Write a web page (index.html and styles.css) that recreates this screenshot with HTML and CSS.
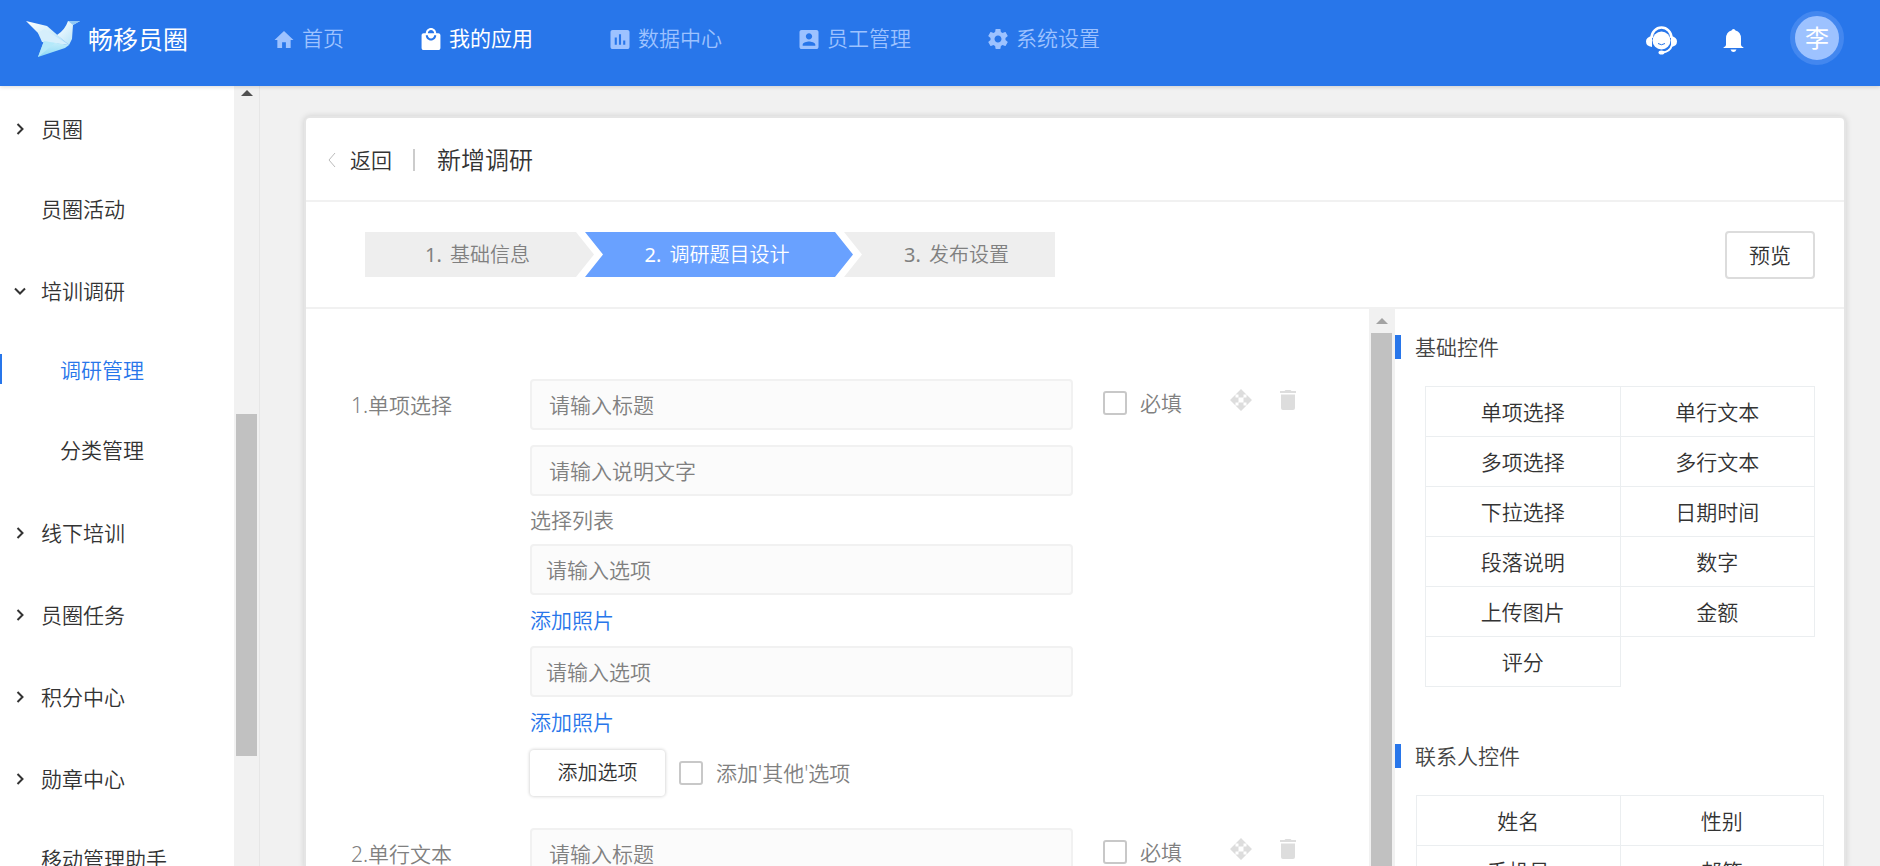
FILE: index.html
```html
<!DOCTYPE html>
<html lang="zh-CN">
<head>
<meta charset="utf-8">
<meta name="viewport" content="width=device-width, initial-scale=1">
<title>新增调研 - 畅移员圈</title>
<link rel="stylesheet" href="styles.css">
</head>
<body>
<svg class="sprite" aria-hidden="true">
  <symbol id="icon-right" viewBox="0 0 12 14"><path d="M3.5 2l5 5-5 5" fill="none" stroke="currentColor" stroke-width="2"/></symbol>
  <symbol id="icon-down" viewBox="0 0 12 14"><path d="M1 4.500l5 5 5-5" fill="none" stroke="currentColor" stroke-width="2"/></symbol>
  <symbol id="icon-move" viewBox="0 0 22 22"><path d="M11 0l5.500 5.500h-3V9h-5V5.500h-3zM11 22l5.500-5.500h-3V13h-5v3.500h-3zM0 11l5.500-5.500v3H9v5H5.500v3zM22 11l-5.500-5.500v3H13v5h3.500v3z" fill="currentColor"/><rect x="8.500" y="8.500" width="5" height="5" fill="#fff"/></symbol>
  <symbol id="icon-trash" viewBox="0 0 16 22"><path d="M0 2h4.500l1-1h5l1 1H16v2H0zM1 5.500h14V19q0 2-2 2H3q-2 0-2-2z" fill="currentColor"/></symbol>
</svg>

<header class="topbar">
  <a class="brand" href="#">
    <svg class="brand-logo" viewBox="0 0 54 36" aria-hidden="true">
      <defs>
        <linearGradient id="wing" x1="0" y1="0" x2="1" y2="1"><stop offset="0" stop-color="#fff"/><stop offset="1" stop-color="#a9def7"/></linearGradient>
        <linearGradient id="tail" x1="0" y1="0" x2="0" y2="1"><stop offset="0" stop-color="#c9effb"/><stop offset="1" stop-color="#8bd8f5"/></linearGradient>
      </defs>
      <path d="M0 0l21 5 22 19-26-7z" fill="url(#wing)"/>
      <path d="M12 12l6-4 25 16-27-3z" fill="#d6effc"/>
      <path d="M31 14Q39 9 42 0l12 0-7 4-1 14-3 6z" fill="url(#wing)"/>
      <path d="M42 0h12l-7 4z" fill="#8fc8f5"/>
      <path d="M18 20l25 4-4 3-27 9z" fill="url(#tail)"/>
      <path d="M18 20l-6 16 17-14z" fill="#b4e9fa"/>
    </svg>
    <span>畅移员圈</span>
  </a>
  <nav class="mainnav">
    <a href="#"><svg viewBox="0 0 20 20" aria-hidden="true"><path d="M10 1l10 9.500h-3V19h-5v-6H8v6H3v-8.500H0z"/></svg>首页</a>
    <a href="#" class="current"><svg class="tall" viewBox="3 1 18 21" aria-hidden="true"><path d="M19 6h-2c0-2.760-2.240-5-5-5S7 3.240 7 6H5c-1.100 0-2 .9-2 2v12c0 1.100.9 2 2 2h14c1.100 0 2-.9 2-2V8c0-1.100-.9-2-2-2zm-7-3c1.660 0 3 1.340 3 3H9c0-1.660 1.340-3 3-3zm0 10c-2.760 0-5-2.240-5-5h2c0 1.660 1.340 3 3 3s3-1.340 3-3h2c0 2.760-2.240 5-5 5z"/></svg>我的应用</a>
    <a href="#"><svg viewBox="3 3 18 18" aria-hidden="true"><path d="M19 3H5c-1.100 0-2 .9-2 2v14c0 1.100.9 2 2 2h14c1.100 0 2-.9 2-2V5c0-1.100-.9-2-2-2zM9 17H7v-7h2v7zm4 0h-2V7h2v10zm4 0h-2v-4h2v4z"/></svg>数据中心</a>
    <a href="#"><svg viewBox="3 3 18 18" aria-hidden="true"><path d="M3 5v14c0 1.100.89 2 2 2h14c1.100 0 2-.9 2-2V5c0-1.100-.9-2-2-2H5c-1.110 0-2 .9-2 2zm12 4c0 1.660-1.340 3-3 3s-3-1.340-3-3 1.340-3 3-3 3 1.340 3 3zm-9 8c0-2 4-3.100 6-3.100s6 1.100 6 3.100v1H6v-1z"/></svg>员工管理</a>
    <a href="#"><svg class="tall" viewBox="2 2 20 20" aria-hidden="true"><path d="M19.430 12.980c.04-.32.07-.64.07-.98s-.03-.66-.07-.98l2.110-1.650c.19-.15.24-.42.12-.64l-2-3.460c-.12-.22-.39-.3-.61-.22l-2.490 1c-.52-.4-1.080-.73-1.690-.98l-.38-2.650C14.460 2.180 14.250 2 14 2h-4c-.25 0-.46.18-.49.42l-.38 2.650c-.61.25-1.170.59-1.690.98l-2.490-1c-.23-.09-.49 0-.61.22l-2 3.460c-.13.22-.07.49.12.64l2.110 1.650c-.04.32-.07.65-.07.98s.03.66.07.98l-2.110 1.650c-.19.15-.24.42-.12.64l2 3.460c.12.22.39.3.61.22l2.490-1c.52.4 1.080.73 1.690.98l.38 2.650c.03.24.24.42.49.42h4c.25 0 .46-.18.49-.42l.38-2.650c.61-.25 1.170-.59 1.690-.98l2.490 1c.23.09.49 0 .61-.22l2-3.460c.12-.22.07-.49-.12-.64l-2.110-1.650zM12 15.500c-1.930 0-3.500-1.570-3.500-3.500s1.570-3.500 3.500-3.500 3.500 1.570 3.500 3.500-1.570 3.500-3.500 3.500z"/></svg>系统设置</a>
  </nav>
  <div class="tools">
    <button type="button" class="tool" aria-label="客服">
      <svg width="31" height="29" viewBox="0 0 31 29" aria-hidden="true">
        <circle cx="15.500" cy="14.500" r="9" fill="#fff"/>
        <path d="M5.500 12a10 10.500 0 0 1 20 0" fill="none" stroke="#fff" stroke-width="2.500"/>
        <path d="M26 19q-2 7-10 7.500" fill="none" stroke="#fff" stroke-width="2"/>
        <path d="M6 10v11q-6-1-6-5.500T6 10zM25 10v11q6-1 6-5.500T25 10z" fill="#fff"/>
        <ellipse cx="15.500" cy="26.500" rx="3" ry="2" fill="#fff"/>
        <path d="M12 17.500q3.500 2.500 7 0" fill="none" stroke="#2876ea" stroke-width="1"/>
      </svg>
    </button>
    <button type="button" class="tool" aria-label="通知">
      <svg width="21" height="23" viewBox="0 0 21 23" aria-hidden="true"><path d="M10.500 0q1.500 0 2 1.500 5.500 1.500 5.500 8V16q0 1 2.500 2.500v.5H.5v-.5Q3 17 3 16V9.500q0-6.500 5.500-8 .5-1.500 2-1.500zM7.500 20.500h6q-1 2.500-3 2.500t-3-2.500z" fill="#fff"/></svg>
    </button>
    <button type="button" class="avatar">李</button>
  </div>
</header>

<div class="body">
  <aside class="sidebar">
    <nav class="menu">
      <a href="#" class="parent"><svg><use href="#icon-right"/></svg>员圈</a>
      <a href="#" class="leaf">员圈活动</a>
      <a href="#" class="parent"><svg><use href="#icon-down"/></svg>培训调研</a>
      <a href="#" class="leaf sub active">调研管理</a>
      <a href="#" class="leaf sub">分类管理</a>
      <a href="#" class="parent"><svg><use href="#icon-right"/></svg>线下培训</a>
      <a href="#" class="parent"><svg><use href="#icon-right"/></svg>员圈任务</a>
      <a href="#" class="parent"><svg><use href="#icon-right"/></svg>积分中心</a>
      <a href="#" class="parent"><svg><use href="#icon-right"/></svg>勋章中心</a>
      <a href="#" class="leaf">移动管理助手</a>
    </nav>
    <div class="scrollbar side-scroll" aria-hidden="true"><i class="arrow"></i><i class="before"></i><i class="thumb"></i><i class="after"></i></div>
  </aside>

  <main class="content">
    <section class="card">
      <div class="titlebar">
        <a class="back" href="#"><svg viewBox="0 0 8 16" aria-hidden="true"><path d="M7 1L1 8l6 7" fill="none" stroke="#bbb" stroke-width="1"/></svg>返回</a>
        <h1>新增调研</h1>
      </div>
      <div class="stepbar">
        <ol class="steps">
          <li class="first"><span>1.</span>基础信息</li>
          <li class="now"><span>2.</span>调研题目设计</li>
          <li class="last"><span>3.</span>发布设置</li>
        </ol>
        <button type="button" class="preview">预览</button>
      </div>
      <div class="editor">
        <form class="questions">
          <fieldset class="question">
            <label class="qname" for="q1">1.单项选择</label>
            <div class="fields">
              <input class="field" id="q1" type="text" placeholder="请输入标题">
              <input class="field next" type="text" placeholder="请输入说明文字" aria-label="说明文字">
              <p class="caption">选择列表</p>
              <input class="field option" type="text" placeholder="请输入选项" aria-label="选项一">
              <a class="photo" href="#">添加照片</a>
              <input class="field option" type="text" placeholder="请输入选项" aria-label="选项二">
              <a class="photo" href="#">添加照片</a>
              <div class="more">
                <button type="button" class="add">添加选项</button>
                <label class="check"><input type="checkbox">添加'其他'选项</label>
              </div>
            </div>
            <div class="controls">
              <label class="check"><input type="checkbox">必填</label>
              <button type="button" class="act move" aria-label="移动"><svg><use href="#icon-move"/></svg></button>
              <button type="button" class="act" aria-label="删除"><svg class="bin"><use href="#icon-trash"/></svg></button>
            </div>
          </fieldset>
          <fieldset class="question">
            <label class="qname" for="q2">2.单行文本</label>
            <div class="fields">
              <input class="field" id="q2" type="text" placeholder="请输入标题">
            </div>
            <div class="controls">
              <label class="check"><input type="checkbox">必填</label>
              <button type="button" class="act move" aria-label="移动"><svg><use href="#icon-move"/></svg></button>
              <button type="button" class="act" aria-label="删除"><svg class="bin"><use href="#icon-trash"/></svg></button>
            </div>
          </fieldset>
        </form>
        <div class="scrollbar form-scroll" aria-hidden="true"><i class="arrow"></i><i class="thumb"></i></div>
        <aside class="palette">
          <h2>基础控件</h2>
          <div class="widgets">
            <button type="button">单项选择</button><button type="button">单行文本</button>
            <button type="button">多项选择</button><button type="button">多行文本</button>
            <button type="button">下拉选择</button><button type="button">日期时间</button>
            <button type="button">段落说明</button><button type="button">数字</button>
            <button type="button">上传图片</button><button type="button">金额</button>
            <button type="button">评分</button>
          </div>
          <h2>联系人控件</h2>
          <div class="widgets wide">
            <button type="button">姓名</button><button type="button">性别</button>
            <button type="button">手机号</button><button type="button">邮箱</button>
          </div>
        </aside>
      </div>
    </section>
  </main>
</div>
</body>
</html>
```

FILE: styles.css
```css
* { box-sizing: border-box; }

body {
  margin: 0;
  height: 100vh;
  overflow: hidden;
  display: flex;
  flex-direction: column;
  background: #f1f1f1;
  color: #333;
  font: 350 21px/28px "Noto Sans", "Noto Sans CJK SC", sans-serif;
}

a { color: inherit; text-decoration: none; }
button, input { font: inherit; color: inherit; }
button { cursor: pointer; padding: 0; border: 0; background: none; }
.sprite { display: none; }

/* top bar */
.topbar {
  flex: none;
  height: 86px;
  padding: 0 36px 10px 26px;
  display: flex;
  align-items: center;
  background: #2876ea;
  box-shadow: 0 1px 4px rgba(0, 0, 0, .15);
  z-index: 1;
}
.brand {
  display: flex;
  align-items: center;
  gap: 8px;
  padding-top: 2px;
  color: #fff;
  font-size: 25px;
  font-weight: 400;
}
.brand-logo { width: 54px; height: 36px; }
.mainnav {
  display: flex;
  gap: 77px;
  margin-left: 86px;
  color: #9dc2ff;
  white-space: nowrap;
}
.mainnav a { display: flex; align-items: center; gap: 8px; }
.mainnav svg { width: 20px; height: 19px; margin-top: 2px; fill: currentColor; }
.mainnav .tall { height: 22px; }
.mainnav .current { color: #fff; font-weight: 400; }
.tools { margin-left: auto; display: flex; align-items: center; gap: 46px; }
.tool { display: flex; padding-top: 5px; }
.avatar {
  width: 54px;
  height: 54px;
  border: 5px solid #4387ef;
  border-radius: 50%;
  background: #9dc2ff;
  color: #fff;
  font-size: 24px;
  font-weight: 400;
}

.body { flex: 1; min-height: 0; display: flex; }

/* side menu */
.sidebar {
  flex: none;
  width: 260px;
  display: flex;
  background: #fff;
  border-right: 1px solid #e6e6e6;
}
.menu {
  flex: 1;
  overflow: hidden;
  padding-top: 2px;
  display: flex;
  flex-direction: column;
}
.menu a { flex: none; display: flex; align-items: center; gap: 15px; padding-left: 14px; }
.menu svg { width: 12px; height: 14px; }
.menu .parent { height: 82px; }
.menu .leaf { height: 80px; padding: 0 0 2px 41px; }
.menu .sub { padding: 0 0 4px 60px; }
.menu .active {
  color: #2876ea;
  background: linear-gradient(#2876ea, #2876ea) 0 22px / 2px 30px no-repeat;
}

/* scroll bars */
.scrollbar { flex: none; display: flex; flex-direction: column; background: #f1f1f1; }
.scrollbar .arrow { height: 24px; display: flex; align-items: center; justify-content: center; }
.arrow::before { content: ""; border: 6px solid transparent; border-top: 0; border-bottom-color: #a3a3a3; }
.thumb { background: #c1c1c1; }
.side-scroll { width: 25px; padding: 0 2px; }
.side-scroll .arrow { height: 14px; }
.side-scroll .arrow::before { border-bottom-color: #505050; }
.side-scroll .before { flex: 314; }
.side-scroll .thumb { flex: 342; }
.side-scroll .after { flex: 110; }
.form-scroll { width: 26px; padding: 0 3px 0 2px; }
.form-scroll .thumb { flex: 1; }

/* card */
.content { flex: 1; min-width: 0; padding: 32px 36px 0 46px; display: flex; }
.card {
  flex: 1;
  min-width: 0;
  display: flex;
  flex-direction: column;
  background: #fff;
  border-radius: 4px 4px 0 0;
  box-shadow: 0 0 0 2px #e5e5e5, 0 0 6px 2px rgba(0, 0, 0, .14);
}
.titlebar {
  flex: none;
  height: 84px;
  padding: 2px 22px 0 22px;
  display: flex;
  align-items: center;
  border-bottom: 2px solid #f1f1f1;
}
.back { display: flex; align-items: center; gap: 14px; }
.back svg { width: 8px; height: 16px; }
.titlebar h1 {
  margin: 0 0 0 21px;
  padding-left: 22px;
  font-size: 24px;
  line-height: 22px;
  font-weight: 350;
  border-left: 2px solid #ccc;
}
.stepbar {
  flex: none;
  height: 107px;
  padding: 0 29px 0 59px;
  display: flex;
  align-items: center;
  justify-content: space-between;
  border-bottom: 2px solid #f1f1f1;
}
.steps { display: flex; margin: 0; padding: 0; list-style: none; font-size: 20px; color: #808080; }
.steps li {
  height: 45px;
  display: flex;
  align-items: center;
  justify-content: center;
  gap: 8px;
  background: #eee;
}
.steps span { font-weight: 400; }
.steps .first { width: 229px; padding-right: 38px; padding-left: 34px; clip-path: polygon(0 0, 211px 0, 100% 50%, 211px 100%, 0 100%); }
.steps .now { width: 268px; margin: 0 -9px; padding-right: 4px; background: #69a1ff; color: #fff; clip-path: polygon(0 0, 250px 0, 100% 50%, 250px 100%, 0 100%, 18px 50%); }
.steps .last { width: 211px; padding-left: 14px; clip-path: polygon(0 0, 100% 0, 100% 100%, 0 100%, 18px 50%); }
.preview { width: 90px; height: 48px; border: 2px solid #dcdcdc; border-radius: 4px; }

.editor { flex: 1; min-height: 0; display: flex; }

/* question form */
.questions { flex: 1; min-width: 0; overflow: hidden; padding: 70px 72px 0 45px; color: #808080; }
.question {
  margin: 0 0 32px;
  padding: 0;
  border: 0;
  display: grid;
  grid-template-columns: 179px minmax(0, 1fr) 224px;
  align-items: start;
}
.qname { padding: 12px 0; }
.fields { display: flex; flex-direction: column; }
.field {
  width: 100%;
  height: 51px;
  padding: 0 17px;
  border: 2px solid #f1f1f1;
  border-radius: 4px;
  background: #fbfbfb;
}
.field::placeholder { color: #808080; opacity: 1; }
.next { margin-top: 15px; }
.option { padding: 0 14px; }
.caption { margin: 0; line-height: 48px; }
.photo { align-self: flex-start; line-height: 51px; color: #2876ea; }
.more { display: flex; align-items: center; gap: 14px; margin-top: 2px; }
.add {
  width: 135px;
  height: 46px;
  border-radius: 4px;
  background: #fff;
  box-shadow: 0 0 3px 1px rgba(0, 0, 0, .14);
  color: #333;
  font-size: 20px;
}
.check { display: flex; align-items: center; gap: 13px; white-space: nowrap; }
.check input {
  appearance: none;
  margin: 0;
  width: 24px;
  height: 24px;
  border: 2px solid #c8c8c8;
  border-radius: 3px;
  background: #fff;
}
.check input:checked { background: #2876ea; border-color: #2876ea; }
.controls { display: flex; align-items: flex-start; justify-content: flex-end; gap: 28px; padding: 10px 1px 0 0; }
.controls .check { margin-right: auto; margin-left: 30px; }
.act { display: flex; color: #ddd; }
.act svg { width: 22px; height: 22px; }
.act .bin { width: 16px; }

/* widget palette */
.palette { flex: none; width: 449px; overflow: hidden; padding-top: 26px; }
.palette h2 {
  margin: 0;
  padding-left: 14px;
  border-left: 6px solid #2876ea;
  font-size: 21px;
  line-height: 24px;
  font-weight: 350;
  color: #444;
}
.widgets {
  display: grid;
  grid-template-columns: 1fr 1fr;
  margin: 27px 29px 57px 30px;
  padding: 0 1px 1px 0;
}
.widgets button {
  height: 51px;
  margin: 0 -1px -1px 0;
  border: 1px solid #ebeef0;
}
.wide { margin-left: 21px; margin-right: 20px; }
```
